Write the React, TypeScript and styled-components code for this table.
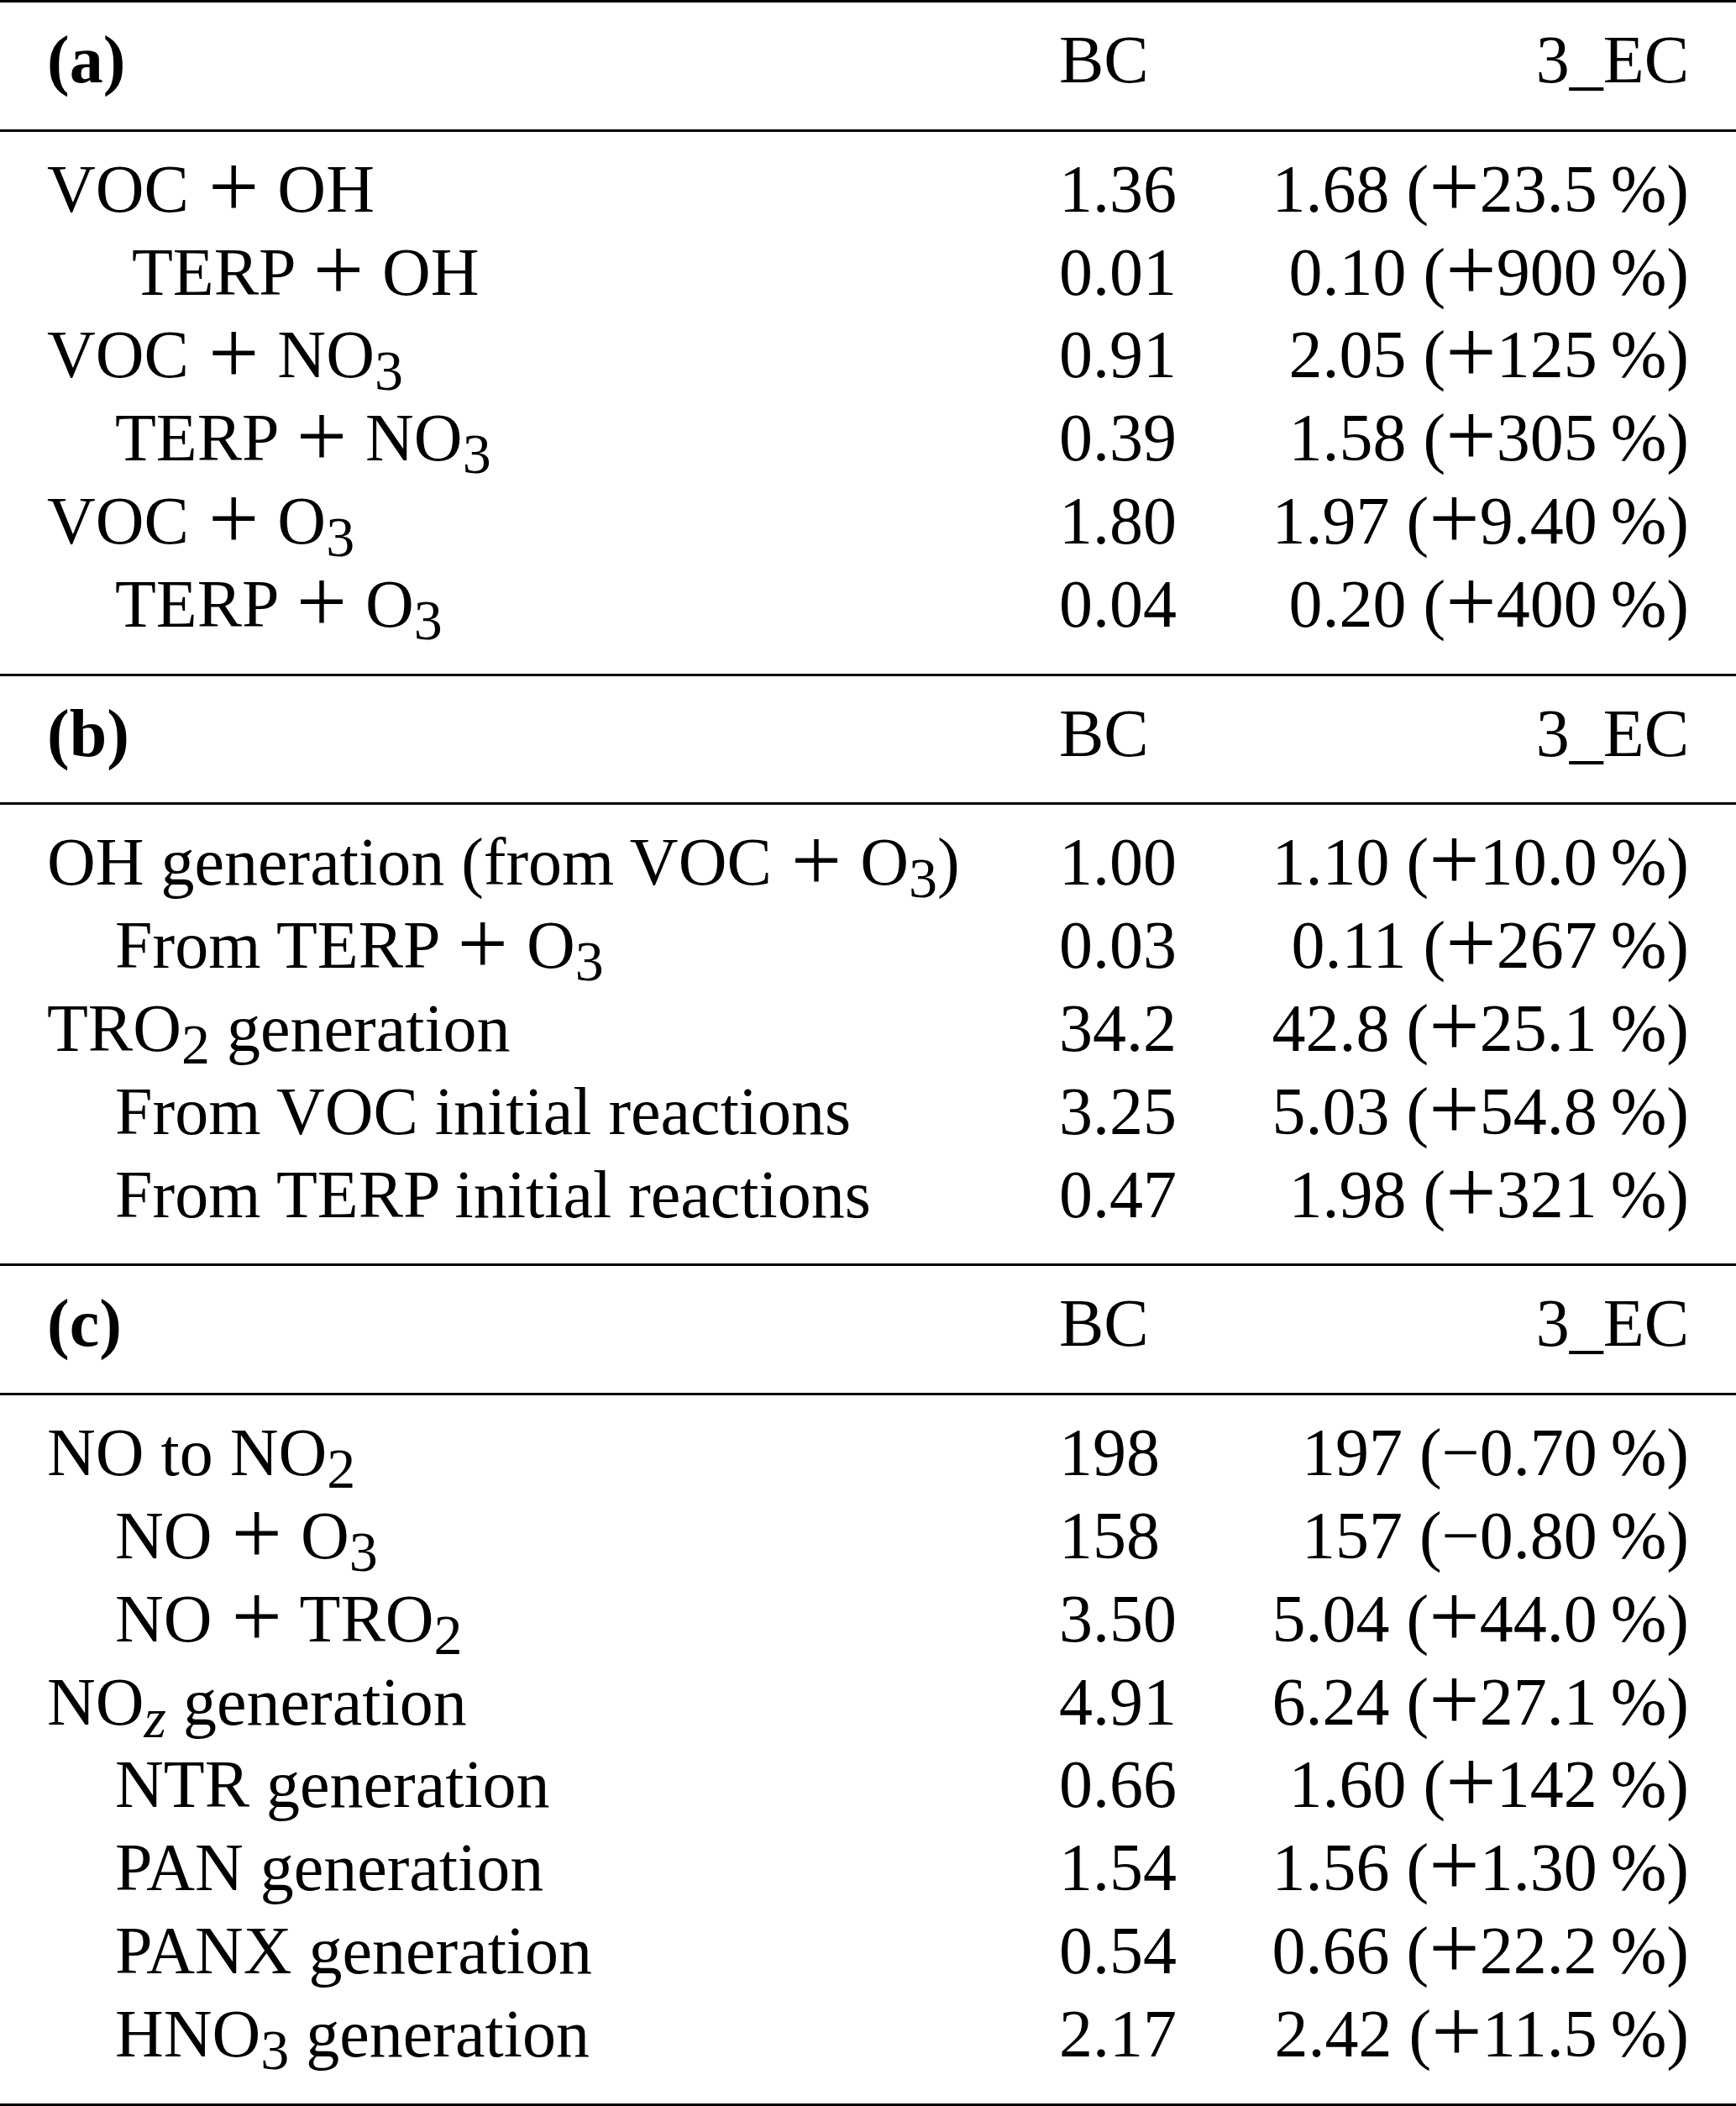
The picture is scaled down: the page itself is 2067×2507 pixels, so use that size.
import React from "react";
import styled, { createGlobalStyle } from "styled-components";

const Global = createGlobalStyle`
  html, body { margin: 0; padding: 0; background: #fff; }
  body { font-family: "Liberation Serif", "Times New Roman", serif; color: #000; }
`;

const Table = styled.div`
  width: 2067px;
  font-family: "Liberation Serif", "Times New Roman", serif;
  font-size: 80px;
  border-bottom: 3px solid #000;
`;

const Section = styled.section`
  border-top: 3px solid #000;
`;

const Block = styled.div<{ $rule?: boolean }>`
  padding: 19px 56px 33px;
  ${(p) => (p.$rule ? "border-top: 3px solid #000;" : "")}
`;

const Row = styled.div`
  display: grid;
  grid-template-columns: 1205px auto 1fr;
  line-height: 98.8px;
  height: 98.8px;
  white-space: nowrap;
`;

const Label = styled.div<{ $indent: number }>`
  padding-left: ${(p) => p.$indent}px;
`;

const Panel = styled.div`
  font-weight: bold;
`;

const Bc = styled.div`
  text-align: left;
`;

const Ec = styled.div`
  text-align: right;
`;

const Sub = styled.sub`
  font-size: 0.85em;
  vertical-align: -0.22em;
  line-height: 0;
`;

const Ital = styled.i`
  font-style: italic;
`;

const PlusSign = styled.span<{ $gap?: boolean }>`
  font-size: 1.34em;
  line-height: 0;
  vertical-align: -0.06em;
  margin: ${(p) => (p.$gap ? "0 2px 0 3px" : "0")};
`;

const P = () => <PlusSign $gap>+</PlusSign>;

type R = { label: React.ReactNode; indent: number; bc: string; sign: string; ec: string };

const s3 = <Sub>3</Sub>;
const s2 = <Sub>2</Sub>;

const sections: { panel: string; rows: R[] }[] = [
  {
    panel: "(a)",
    rows: [
      { label: <>VOC <P /> OH</>, indent: 0, bc: "1.36", sign: "+", ec: "1.68|23.5" },
      { label: <>TERP <P /> OH</>, indent: 101, bc: "0.01", sign: "+", ec: "0.10|900" },
      { label: <>VOC <P /> NO{s3}</>, indent: 0, bc: "0.91", sign: "+", ec: "2.05|125" },
      { label: <>TERP <P /> NO{s3}</>, indent: 81, bc: "0.39", sign: "+", ec: "1.58|305" },
      { label: <>VOC <P /> O{s3}</>, indent: 0, bc: "1.80", sign: "+", ec: "1.97|9.40" },
      { label: <>TERP <P /> O{s3}</>, indent: 81, bc: "0.04", sign: "+", ec: "0.20|400" },
    ],
  },
  {
    panel: "(b)",
    rows: [
      { label: <>OH generation (from VOC <P /> O{s3})</>, indent: 0, bc: "1.00", sign: "+", ec: "1.10|10.0" },
      { label: <>From TERP <P /> O{s3}</>, indent: 81, bc: "0.03", sign: "+", ec: "0.11|267" },
      { label: <>TRO{s2} generation</>, indent: 0, bc: "34.2", sign: "+", ec: "42.8|25.1" },
      { label: "From VOC initial reactions", indent: 81, bc: "3.25", sign: "+", ec: "5.03|54.8" },
      { label: "From TERP initial reactions", indent: 81, bc: "0.47", sign: "+", ec: "1.98|321" },
    ],
  },
  {
    panel: "(c)",
    rows: [
      { label: <>NO to NO{s2}</>, indent: 0, bc: "198", sign: "\u2212", ec: "197|0.70" },
      { label: <>NO <P /> O{s3}</>, indent: 81, bc: "158", sign: "\u2212", ec: "157|0.80" },
      { label: <>NO <P /> TRO{s2}</>, indent: 81, bc: "3.50", sign: "+", ec: "5.04|44.0" },
      { label: <>NO<Sub><Ital>z</Ital></Sub> generation</>, indent: 0, bc: "4.91", sign: "+", ec: "6.24|27.1" },
      { label: "NTR generation", indent: 81, bc: "0.66", sign: "+", ec: "1.60|142" },
      { label: "PAN generation", indent: 81, bc: "1.54", sign: "+", ec: "1.56|1.30" },
      { label: "PANX generation", indent: 81, bc: "0.54", sign: "+", ec: "0.66|22.2" },
      { label: <>HNO{s3} generation</>, indent: 81, bc: "2.17", sign: "+", ec: "2.42|11.5" },
    ],
  },
];

function Value({ sign, ec }: { sign: string; ec: string }) {
  const [v, pct] = ec.split("|");
  return (
    <>
      {v} ({sign === "+" ? <PlusSign>+</PlusSign> : sign}
      {pct}
      {"\u2009%)"}
    </>
  );
}

export default function App() {
  return (
    <>
      <Global />
      <Table>
        {sections.map((sec) => (
          <Section key={sec.panel}>
            <Block>
              <Row>
                <Panel>{sec.panel}</Panel>
                <Bc>BC</Bc>
                <Ec>3_EC</Ec>
              </Row>
            </Block>
            <Block $rule>
              {sec.rows.map((r, i) => (
                <Row key={i}>
                  <Label $indent={r.indent}>{r.label}</Label>
                  <Bc>{r.bc}</Bc>
                  <Ec>
                    <Value sign={r.sign} ec={r.ec} />
                  </Ec>
                </Row>
              ))}
            </Block>
          </Section>
        ))}
      </Table>
    </>
  );
}
